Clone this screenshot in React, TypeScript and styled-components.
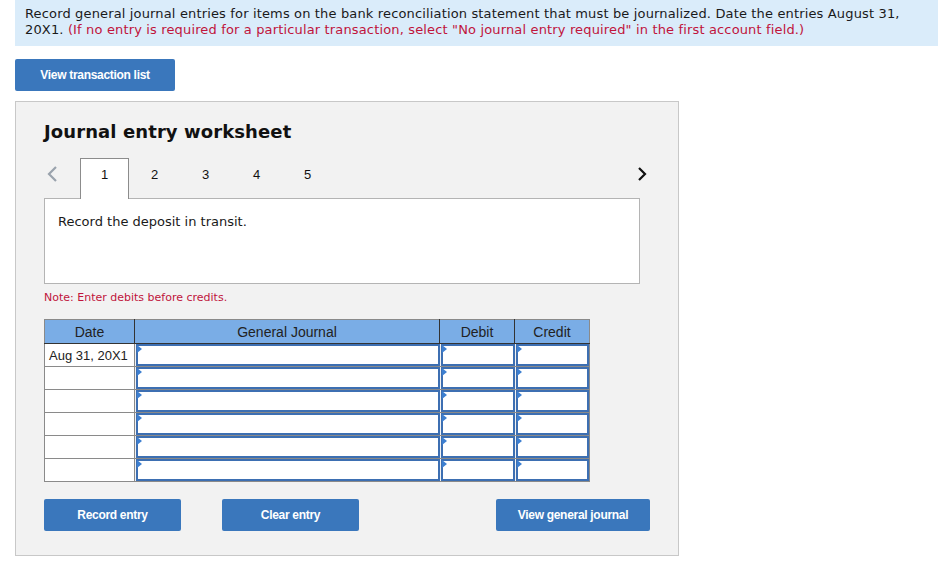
import React from 'react';
import styled, { createGlobalStyle } from 'styled-components';

const GlobalStyle = createGlobalStyle`
  html, body {
    margin: 0;
    padding: 0;
    background: #ffffff;
  }
  body {
    font-family: "DejaVu Sans", Verdana, sans-serif;
    color: #1a1a1a;
  }
`;

const Page = styled.div`
  width: 949px;
  height: 565px;
  padding: 0 11px 0 15px;
  box-sizing: border-box;
  display: flex;
  flex-direction: column;
  align-items: flex-start;
`;

const Instructions = styled.div`
  align-self: stretch;
  background: #daecfa;
  padding: 6px 10px 8px 10px;
  font-size: 13px;
  line-height: 16px;
  letter-spacing: 0.15px;
  color: #1a1a1a;
`;

const Hint = styled.span`
  color: #c0143c;
`;

const BlueButton = styled.button<{ $w: number }>`
  width: ${(p) => p.$w}px;
  height: 32px;
  padding: 0;
  border: none;
  border-radius: 2px;
  background: #3a77bc;
  color: #ffffff;
  font-family: "Liberation Sans", Arial, sans-serif;
  font-weight: 700;
  font-size: 12px;
  letter-spacing: -0.3px;
  white-space: nowrap;
  cursor: pointer;
`;

const TopButton = styled(BlueButton)`
  margin-top: 13px;
`;

const Panel = styled.div`
  margin-top: 10px;
  width: 664px;
  height: 455px;
  box-sizing: border-box;
  background: #f2f2f2;
  border: 1px solid #c8c8c8;
  padding: 19px 0 0 28px;
`;

const Title = styled.h2`
  margin: 0;
  font-size: 18px;
  font-weight: 700;
  line-height: 22px;
  letter-spacing: 0.1px;
  color: #111;
`;

const TabBar = styled.div`
  margin-top: 14px;
  display: flex;
  align-items: flex-end;
  height: 41px;
  width: 596px;
`;

const Arrow = styled.div`
  width: 36px;
  height: 41px;
  display: flex;
  align-items: center;
  padding: 0 0 8px 2px;
  box-sizing: border-box;
`;

const NextArrow = styled.div`
  margin-left: auto;
  height: 41px;
  display: flex;
  align-items: center;
  padding-bottom: 8px;
  margin-right: -8px;
  box-sizing: border-box;
`;

const Tab = styled.div<{ $active?: boolean }>`
  width: ${(p) => (p.$active ? 49 : 51)}px;
  height: 41px;
  box-sizing: border-box;
  display: flex;
  align-items: center;
  justify-content: center;
  padding-bottom: 10px;
  font-family: "Liberation Sans", Arial, sans-serif;
  font-size: 13px;
  color: #111;
  background: ${(p) => (p.$active ? '#ffffff' : 'transparent')};
  border: ${(p) => (p.$active ? '1px solid #8c8c8c' : '1px solid transparent')};
  border-bottom: none;
  margin-bottom: -1px;
  position: relative;
  z-index: 1;
`;

const Prompt = styled.div`
  width: 596px;
  height: 86px;
  box-sizing: border-box;
  background: #ffffff;
  border: 1px solid #b4b4b4;
  padding: 15px 13px;
  font-size: 13px;
  color: #1a1a1a;
`;

const Note = styled.div`
  margin-top: 7px;
  font-size: 11px;
  color: #c0143c;
`;

const Table = styled.table`
  margin-top: 15px;
  table-layout: fixed;
  border-collapse: collapse;
  border: 1px solid #8a8a8a;
  font-family: "Liberation Sans", Arial, sans-serif;
  font-size: 13px;
  color: #222;
`;

const Th = styled.th<{ $w: number }>`
  width: ${(p) => p.$w}px;
  height: 23px;
  padding: 0;
  background: #7aade6;
  font-weight: 400;
  font-size: 14px;
  color: #222;
  border: 1px solid #333;
  border-top: 1px solid #8a8a8a;
  &:first-child {
    border-left: 1px solid #8a8a8a;
  }
  &:last-child {
    border-right: 1px solid #8a8a8a;
  }
`;

const DateCell = styled.td`
  height: 22px;
  padding: 2px 0 0 4px;
  box-sizing: border-box;
  background: #ffffff;
  border: 1px solid #8a8a8a;
  text-align: left;
  white-space: nowrap;
  line-height: 20px;
`;

const InputCell = styled.td`
  height: 22px;
  padding: 0;
  background: #f2f2f2;
  border: 1px solid #8a8a8a;
  border-left: none;
  border-right: none;
`;

const Field = styled.div`
  height: 22px;
  box-sizing: border-box;
  background: #ffffff;
  border: 2px solid #3d6fb2;
  margin-left: 1px;
  position: relative;
  &::before {
    content: '';
    position: absolute;
    left: -1px;
    top: -1px;
    border-top: 4px solid transparent;
    border-bottom: 4px solid transparent;
    border-left: 5px solid #3d7fd0;
  }
`;

const Actions = styled.div`
  margin-top: 17px;
  width: 606px;
  display: flex;
  gap: 41px;
`;

const Spacer = styled.div`
  flex: 1;
`;

const rows = ['Aug 31, 20X1', '', '', '', '', ''];

export default function App() {
  return (
    <>
      <GlobalStyle />
      <Page>
        <Instructions>
          Record general journal entries for items on the bank reconciliation statement that must be journalized. Date the entries August 31,
          <br />
          20X1. <Hint>(If no entry is required for a particular transaction, select "No journal entry required" in the first account field.)</Hint>
        </Instructions>
        <TopButton $w={160}>View transaction list</TopButton>
        <Panel>
          <Title>Journal entry worksheet</Title>
          <TabBar>
            <Arrow>
              <svg width="12" height="18" viewBox="0 0 12 18">
                <path d="M10 2 L3 9 L10 16" fill="none" stroke="#9aa3ad" strokeWidth="2.2" />
              </svg>
            </Arrow>
            <Tab $active>1</Tab>
            <Tab>2</Tab>
            <Tab>3</Tab>
            <Tab>4</Tab>
            <Tab>5</Tab>
            <NextArrow>
              <svg width="12" height="18" viewBox="0 0 12 18">
                <path d="M3 3 L9 9 L3 15" fill="none" stroke="#111" strokeWidth="2.2" />
              </svg>
            </NextArrow>
          </TabBar>
          <Prompt>Record the deposit in transit.</Prompt>
          <Note>Note: Enter debits before credits.</Note>
          <Table>
            <thead>
              <tr>
                <Th $w={89}>Date</Th>
                <Th $w={304}>General Journal</Th>
                <Th $w={74}>Debit</Th>
                <Th $w={74}>Credit</Th>
              </tr>
            </thead>
            <tbody>
              {rows.map((d, i) => (
                <tr key={i}>
                  <DateCell>{d}</DateCell>
                  <InputCell><Field /></InputCell>
                  <InputCell><Field /></InputCell>
                  <InputCell><Field /></InputCell>
                </tr>
              ))}
            </tbody>
          </Table>
          <Actions>
            <BlueButton $w={137}>Record entry</BlueButton>
            <BlueButton $w={137}>Clear entry</BlueButton>
            <Spacer />
            <BlueButton $w={154}>View general journal</BlueButton>
          </Actions>
        </Panel>
      </Page>
    </>
  );
}
